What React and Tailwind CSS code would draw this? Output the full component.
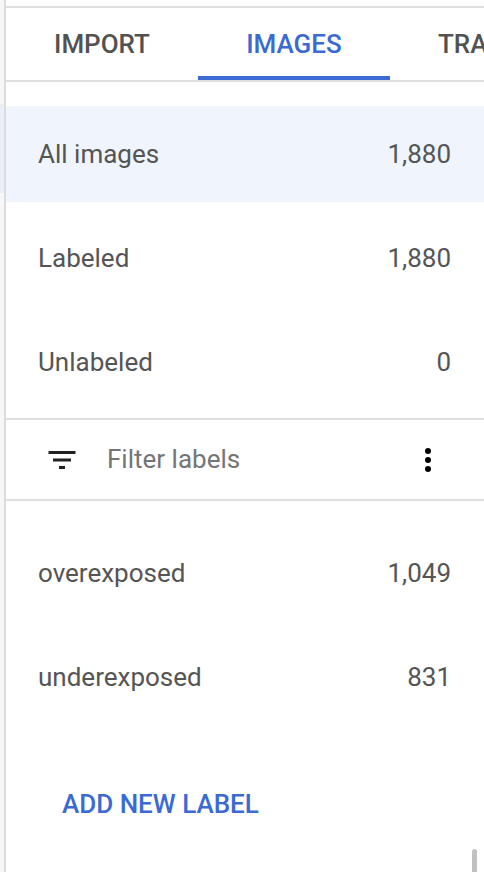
import React from "react";

function FilterIcon() {
  return (
    <svg width="36" height="36" viewBox="0 0 24 24" fill="#212121">
      <path d="M10 18h4v-2h-4v2zM3 6v2h18V6H3zm3 7h12v-2H6v2z" />
    </svg>
  );
}

function MoreVert() {
  return (
    <svg width="36" height="36" viewBox="0 0 24 24" fill="#000">
      <circle cx="12" cy="6" r="2" />
      <circle cx="12" cy="12" r="2" />
      <circle cx="12" cy="18" r="2" />
    </svg>
  );
}

function Row({ label, count, active }) {
  return (
    <div
      className={`flex h-[96px] shrink-0 items-center justify-between pl-[32px] pr-[33px] ${
        active ? "bg-[#eff4fd]" : ""
      }`}
    >
      <span>{label}</span>
      <span>{count}</span>
    </div>
  );
}

export default function App() {
  return (
    <div
      className="flex h-[872px] w-[484px] overflow-hidden bg-white text-[26px] text-[#555]"
      style={{ fontFamily: "Roboto, 'Liberation Sans', sans-serif" }}
    >
      {/* left strip */}
      <div className="flex w-[4px] shrink-0 flex-col bg-[#f7f7f7]">
        <div className="h-[104px] shrink-0" />
        <div className="h-[89px] shrink-0 bg-[#e9eef8]" />
      </div>
      <div className="w-[2px] shrink-0 bg-[#dcdcdc]" />
      {/* main */}
      <div className="relative flex h-[872px] min-w-0 flex-1 flex-col overflow-hidden">
        <div className="h-[6px] shrink-0 bg-white" />
        <div className="h-[2px] shrink-0 bg-[#e0e0e0]" />
        {/* tabs */}
        <div className="flex h-[74px] shrink-0 border-b-2 border-[#e0e0e0] font-medium">
          <div className="flex w-[192px] shrink-0 items-center justify-center text-[#525252]">
            IMPORT
          </div>
          <div className="relative flex w-[192px] shrink-0 items-center justify-center text-[#3b6ad4]">
            IMAGES
            <div className="absolute bottom-0 left-0 right-0 h-[4px] bg-[#3b6ad4]" />
          </div>
          <div className="flex w-[192px] shrink-0 items-center whitespace-nowrap pl-[48px] text-[#525252]">
            TRAIN
          </div>
        </div>
        {/* list */}
        <div className="flex shrink-0 flex-col gap-[8px] pt-[24px]">
          <Row label="All images" count="1,880" active />
          <Row label="Labeled" count="1,880" />
          <Row label="Unlabeled" count="0" />
        </div>
        <div className="mt-[8px] h-[2px] shrink-0 bg-[#e0e0e0]" />
        <div className="flex h-[79px] shrink-0 items-center pl-[38px] pr-[38px]">
          <FilterIcon />
          <span className="ml-[27px] flex-1 text-[#757575]">Filter labels</span>
          <MoreVert />
        </div>
        <div className="h-[2px] shrink-0 bg-[#e0e0e0]" />
        <div className="flex shrink-0 flex-col gap-[8px] pt-[24px]">
          <Row label="overexposed" count="1,049" />
          <Row label="underexposed" count="831" />
        </div>
        <div className="flex h-[158px] shrink-0 items-center pl-[56px] font-medium text-[#3b6ad4]">
          ADD NEW LABEL
        </div>
        <div className="absolute bottom-0 right-[7px] h-[23px] w-[5px] rounded-t-full bg-[#c1c1c1]" />
      </div>
    </div>
  );
}
